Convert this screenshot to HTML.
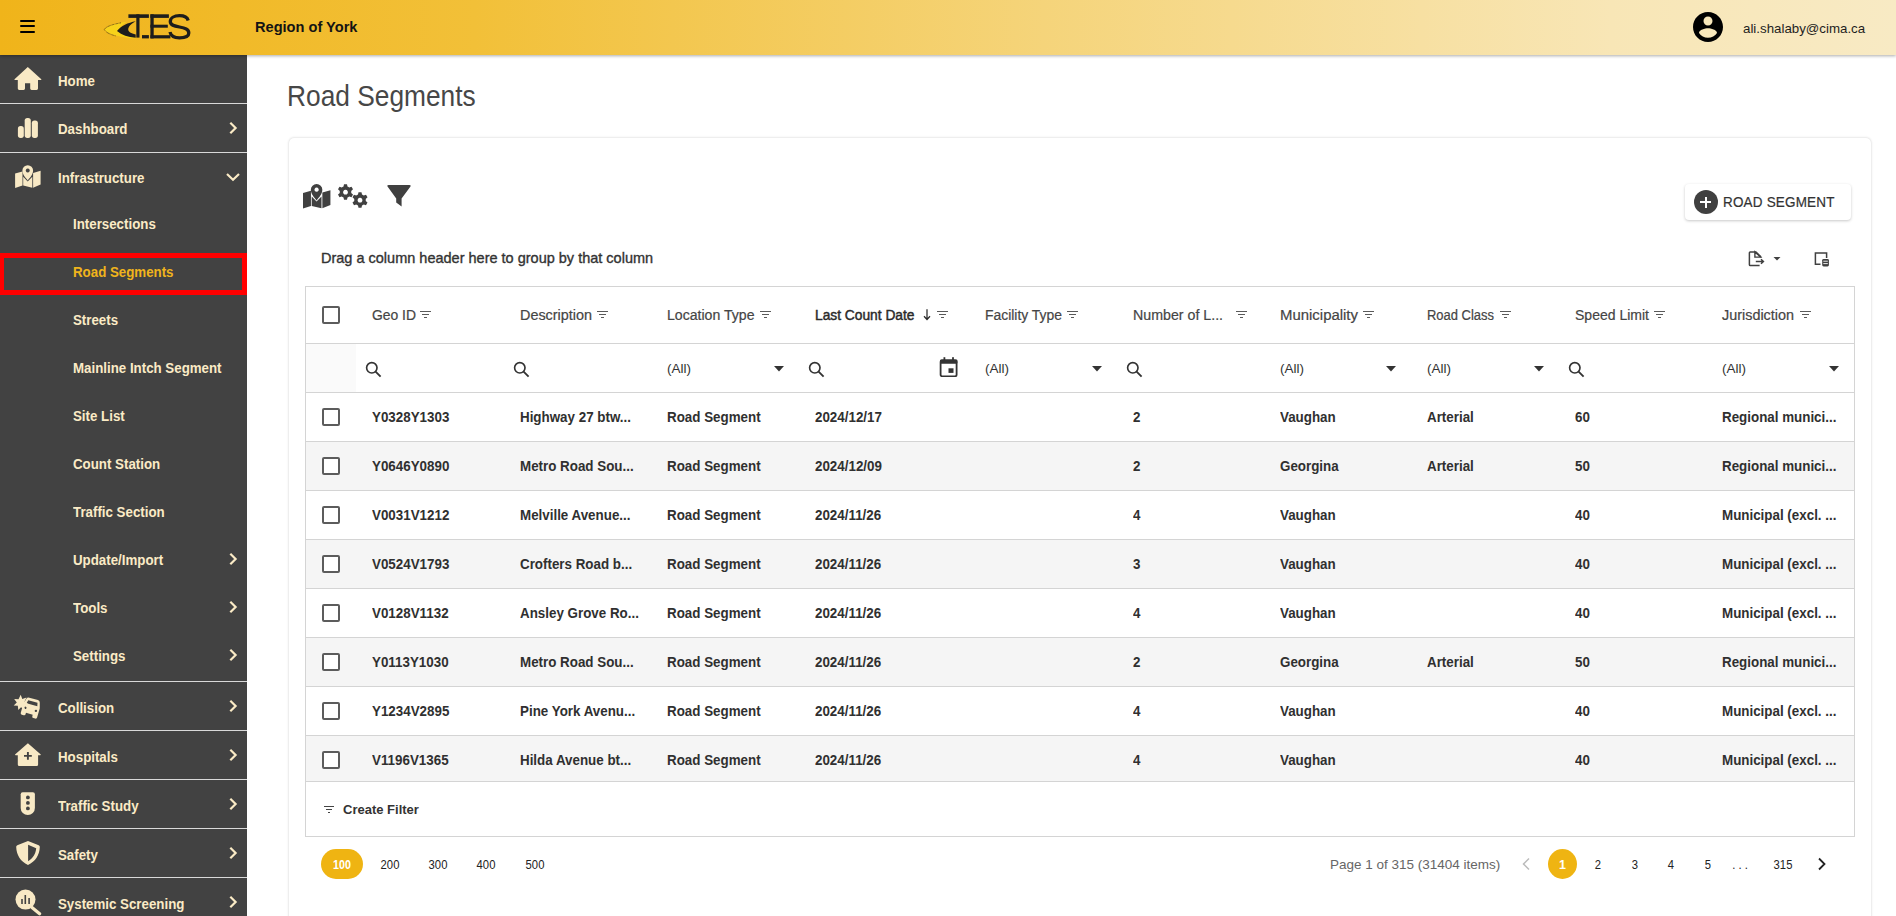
<!DOCTYPE html><html><head><meta charset="utf-8"><style>
*{box-sizing:border-box;margin:0;padding:0}
html,body{width:1896px;height:916px;overflow:hidden;background:#fff;font-family:"Liberation Sans",sans-serif;color:#333}
.a{position:absolute}
.t{position:absolute;white-space:nowrap;line-height:1}
#hdr{position:absolute;left:0;top:0;width:1896px;height:55px;background:linear-gradient(90deg,#f0b41a 0%,#f2c038 25%,#f5d47a 55%,#f8e6b6 85%,#f8eac4 100%);box-shadow:0 1px 3px rgba(0,0,0,.33);z-index:5}
#side{position:absolute;left:0;top:55px;width:247px;height:861px;background:#424242;z-index:3;font-weight:bold;color:#fbebc6}
.sb{position:absolute;left:0;width:247px;height:1px;background:#d9d9d9}
.card{position:absolute;left:289px;top:138px;width:1582px;height:800px;background:#fff;border-radius:5px;box-shadow:0 0 2.5px rgba(0,0,0,.22)}
.cb{position:absolute;width:18px;height:18px;border:2px solid #5c5c5c;border-radius:2px;background:#fff}
.hd{color:#555;font-size:14px}
.dc{color:#303030;font-size:14px;font-weight:bold;transform-origin:0 0;transform:scaleX(0.955)}
</style></head><body>
<div id="hdr">
<div class="a" style="left:19.5px;top:19.5px;width:15.6px;height:2.5px;background:#000;border-radius:1.2px"></div>
<div class="a" style="left:19.5px;top:24.9px;width:15.6px;height:2.5px;background:#000;border-radius:1.2px"></div>
<div class="a" style="left:19.5px;top:30.5px;width:15.6px;height:2.5px;background:#000;border-radius:1.2px"></div>
<svg class="a" style="left:100px;top:8px" width="96" height="36" viewBox="0 0 96 36">
<path d="M27 13.8 C17 15 9 17.5 4.5 21.8 C9 26.5 22 30 35.7 30.6 L35.7 29.6 C28 29 22 27 17.2 23 C20 19 23 16 27 13.8 Z" fill="#f7d21a"/>
<path d="M21 14.8 C12 16.5 6 18.5 4.3 21.5 C6 24.5 10 26.5 16 28" fill="none" stroke="#2a2410" stroke-width="0.9" stroke-dasharray="0.8 0.6" opacity="0.75"/>
<path d="M35.7 13.2 C28 14.5 21 18 17 23 C22 27 28 29.2 35.7 29.8 L35.7 26.5 C31 25.5 28.2 23.8 28.2 21.5 C28.2 18.5 31 16 35.7 13.2 Z" fill="#1d1d1d"/>
<rect x="28.4" y="6.3" width="20.5" height="3.6" fill="#1d1d1d"/>
<rect x="36.3" y="6.3" width="3.2" height="23.3" fill="#1d1d1d"/>
<rect x="42" y="27.1" width="6.9" height="3.3" fill="#1d1d1d"/>
<rect x="50.4" y="6.3" width="3.3" height="24.1" fill="#1d1d1d"/>
<rect x="50.4" y="6.3" width="18.5" height="3.6" fill="#1d1d1d"/>
<rect x="50.4" y="16.7" width="17.4" height="3" fill="#1d1d1d"/>
<rect x="50.4" y="27.2" width="20" height="3.2" fill="#1d1d1d"/>
<path d="M88.2 12.5 C87.2 9 84 7.7 79.5 7.7 C74 7.7 70.3 10 70.3 13.5 C70.3 17 74 18 79.5 19 C85 20 88.8 21 88.8 25 C88.8 28.5 84.5 29.8 79.5 29.8 C74.5 29.8 70.8 28 70 24" fill="none" stroke="#1d1d1d" stroke-width="3.3"/>
</svg>
<div class="t" style="left:255px;top:20px;font-size:14.6px;font-weight:bold;color:#141414">Region of York</div>
<svg class="a" style="left:1690px;top:8.8px" width="36" height="36" viewBox="0 0 24 24"><path fill="#000" d="M12 2C6.48 2 2 6.48 2 12s4.48 10 10 10 10-4.48 10-10S17.52 2 12 2zm0 3c1.66 0 3 1.34 3 3s-1.34 3-3 3-3-1.34-3-3 1.34-3 3-3zm0 14.2c-2.5 0-4.71-1.28-6-3.22.03-1.99 4-3.08 6-3.08 1.99 0 5.97 1.09 6 3.08-1.29 1.94-3.5 3.22-6 3.22z"/></svg>
<div class="t" style="left:1743px;top:21.5px;font-size:13.6px;color:#1e1e1e;transform-origin:0 0;transform:scaleX(0.978)">ali.shalaby@cima.ca</div>
</div>
<div id="side">
<div class="t" style="left:58px;top:19px;font-size:14px;transform-origin:0 0;transform:scaleX(0.95)">Home</div>
<div class="t" style="left:58px;top:67px;font-size:14px;transform-origin:0 0;transform:scaleX(0.95)">Dashboard</div>
<svg class="a" style="left:226px;top:65.5px" width="14" height="14" viewBox="0 0 14 14"><path d="M4.3 1.8 L9.6 7 L4.3 12.2" fill="none" stroke="#fbebc6" stroke-width="2.2"/></svg>
<div class="t" style="left:58px;top:116px;font-size:14px;transform-origin:0 0;transform:scaleX(0.95)">Infrastructure</div>
<svg class="a" style="left:225px;top:114.5px" width="16" height="14" viewBox="0 0 16 14"><path d="M2 4 L8 9.8 L14 4" fill="none" stroke="#fbebc6" stroke-width="2.2"/></svg>
<div class="sb" style="top:48px"></div>
<div class="sb" style="top:97px"></div>
<div class="sb" style="top:626px"></div>
<div class="sb" style="top:675px"></div>
<div class="sb" style="top:724px"></div>
<div class="sb" style="top:773px"></div>
<div class="sb" style="top:822px"></div>
<div class="t" style="left:73px;top:162px;font-size:14px;transform-origin:0 0;transform:scaleX(0.95);color:#fbebc6">Intersections</div>
<div class="t" style="left:73px;top:210px;font-size:14px;transform-origin:0 0;transform:scaleX(0.95);color:#f0b41c">Road Segments</div>
<div class="t" style="left:73px;top:258px;font-size:14px;transform-origin:0 0;transform:scaleX(0.95);color:#fbebc6">Streets</div>
<div class="t" style="left:73px;top:306px;font-size:14px;transform-origin:0 0;transform:scaleX(0.95);color:#fbebc6">Mainline Intch Segment</div>
<div class="t" style="left:73px;top:354px;font-size:14px;transform-origin:0 0;transform:scaleX(0.95);color:#fbebc6">Site List</div>
<div class="t" style="left:73px;top:402px;font-size:14px;transform-origin:0 0;transform:scaleX(0.95);color:#fbebc6">Count Station</div>
<div class="t" style="left:73px;top:450px;font-size:14px;transform-origin:0 0;transform:scaleX(0.95);color:#fbebc6">Traffic Section</div>
<div class="t" style="left:73px;top:498px;font-size:14px;transform-origin:0 0;transform:scaleX(0.95);color:#fbebc6">Update/Import</div>
<svg class="a" style="left:226px;top:496.5px" width="14" height="14" viewBox="0 0 14 14"><path d="M4.3 1.8 L9.6 7 L4.3 12.2" fill="none" stroke="#fbebc6" stroke-width="2.2"/></svg>
<div class="t" style="left:73px;top:546px;font-size:14px;transform-origin:0 0;transform:scaleX(0.95);color:#fbebc6">Tools</div>
<svg class="a" style="left:226px;top:544.5px" width="14" height="14" viewBox="0 0 14 14"><path d="M4.3 1.8 L9.6 7 L4.3 12.2" fill="none" stroke="#fbebc6" stroke-width="2.2"/></svg>
<div class="t" style="left:73px;top:594px;font-size:14px;transform-origin:0 0;transform:scaleX(0.95);color:#fbebc6">Settings</div>
<svg class="a" style="left:226px;top:592.5px" width="14" height="14" viewBox="0 0 14 14"><path d="M4.3 1.8 L9.6 7 L4.3 12.2" fill="none" stroke="#fbebc6" stroke-width="2.2"/></svg>
<div class="a" style="left:-1px;top:198px;width:248px;height:42px;border:5px solid #f00"></div>
<div class="t" style="left:58px;top:645.7px;font-size:14px;transform-origin:0 0;transform:scaleX(0.95)">Collision</div>
<svg class="a" style="left:226px;top:644.2px" width="14" height="14" viewBox="0 0 14 14"><path d="M4.3 1.8 L9.6 7 L4.3 12.2" fill="none" stroke="#fbebc6" stroke-width="2.2"/></svg>
<div class="t" style="left:58px;top:694.7px;font-size:14px;transform-origin:0 0;transform:scaleX(0.95)">Hospitals</div>
<svg class="a" style="left:226px;top:693.2px" width="14" height="14" viewBox="0 0 14 14"><path d="M4.3 1.8 L9.6 7 L4.3 12.2" fill="none" stroke="#fbebc6" stroke-width="2.2"/></svg>
<div class="t" style="left:58px;top:743.7px;font-size:14px;transform-origin:0 0;transform:scaleX(0.95)">Traffic Study</div>
<svg class="a" style="left:226px;top:742.2px" width="14" height="14" viewBox="0 0 14 14"><path d="M4.3 1.8 L9.6 7 L4.3 12.2" fill="none" stroke="#fbebc6" stroke-width="2.2"/></svg>
<div class="t" style="left:58px;top:792.7px;font-size:14px;transform-origin:0 0;transform:scaleX(0.95)">Safety</div>
<svg class="a" style="left:226px;top:791.2px" width="14" height="14" viewBox="0 0 14 14"><path d="M4.3 1.8 L9.6 7 L4.3 12.2" fill="none" stroke="#fbebc6" stroke-width="2.2"/></svg>
<div class="t" style="left:58px;top:841.7px;font-size:14px;transform-origin:0 0;transform:scaleX(0.95)">Systemic Screening</div>
<svg class="a" style="left:226px;top:840.2px" width="14" height="14" viewBox="0 0 14 14"><path d="M4.3 1.8 L9.6 7 L4.3 12.2" fill="none" stroke="#fbebc6" stroke-width="2.2"/></svg>
<svg class="a" style="left:14px;top:11px" width="28" height="25" viewBox="14 66 28 25"><path fill="#f8e9c5" d="M27.8 66.9 L41.3 79.2 Q41.8 80 40.8 80 L38 80 L38 88.6 Q38 90 36.6 90 L31.6 90 Q30.2 90 30.2 88.6 L30.2 83.3 L25 83.3 L25 88.6 Q25 90 23.6 90 L19.2 90 Q17.8 90 17.8 88.6 L17.8 80 L15 80 Q14 80 14.5 79.2 Z"/></svg>
<svg class="a" style="left:17px;top:62px" width="22" height="22" viewBox="17 117 22 22"><rect x="17.9" y="126.1" width="5.9" height="11.8" rx="2.6" fill="#f8e9c5"/><rect x="24.7" y="117.9" width="6.1" height="20" rx="2.6" fill="#f8e9c5"/><rect x="31.8" y="120.6" width="6.1" height="17.3" rx="2.6" fill="#f8e9c5"/></svg>
<svg class="a" style="left:14px;top:108px" width="28" height="26" viewBox="14 163 28 26"><g transform="translate(15.1 165.1) scale(1.0)" fill="#f8e9c5"><path d="M0 8.3 L7.4 6.3 L7.4 20.4 L0 22.8 Z"/><path d="M8.1 11.6 L12.6 16.3 L17.2 11.6 L17.2 22.6 L8.1 20.4 Z"/><path d="M18 7.9 L25.5 5.7 L25.5 19.5 L18 22.6 Z"/><path fill-rule="evenodd" d="M12.65 15.3 C10.5 12.6 7.3 9.4 7.3 5.4 A5.35 5.35 0 0 1 18 5.4 C18 9.4 14.8 12.6 12.65 15.3 Z M12.65 3.3 A2 2 0 1 0 12.66 3.3 Z"/></g></svg>
<svg class="a" style="left:12px;top:637px" width="30" height="28" viewBox="12 692 30 28"><path fill="#f8e9c5" d="M20.7 694.8 L22.3 699 L26.5 697.5 L24.5 701.5 L28 703.5 L24 705 L24.8 709.8 L21 707.2 L18.3 710 L17.8 705.8 L13.7 705.5 L16.8 702.5 L14.2 699 L18.5 699.3 Z"/><g transform="rotate(16 31 708)"><path fill="#f8e9c5" fill-rule="evenodd" d="M24 700.5 Q24.5 698.5 26.5 698.5 L35.5 698.5 Q37.5 698.5 38 700.5 L39.5 706 L39.5 715.5 Q39.5 717 38 717 L36 717 Q34.5 717 34.5 715.5 L34.5 714 L27.5 714 L27.5 715.5 Q27.5 717 26 717 L24 717 Q22.5 717 22.5 715.5 L22.5 706 Z M26.2 701.2 L35.8 701.2 L36.6 704.6 L25.4 704.6 Z M25.5 708.2 a1.2 1.2 0 1 0 0.01 0 Z M36.5 708.2 a1.2 1.2 0 1 0 0.01 0 Z"/></g></svg>
<svg class="a" style="left:14px;top:687px" width="28" height="26" viewBox="14 742 28 26"><path fill="#f8e9c5" d="M27.9 743.2 L40.5 754.2 Q41.2 755.2 40.2 755.2 L38.1 755.2 L38.1 764.6 Q38.1 766.1 36.6 766.1 L19.3 766.1 Q17.8 766.1 17.8 764.6 L17.8 755.2 L15.6 755.2 Q14.6 755.2 15.3 754.2 Z"/><path d="M24 755.9 H31.8 M27.9 752 V759.8" stroke="#424242" stroke-width="1.9"/></svg>
<svg class="a" style="left:20px;top:736px" width="16" height="26" viewBox="20 791 16 26"><path fill="#f8e9c5" d="M20.7 794.2 Q20.7 792.2 22.7 792.2 L32.9 792.2 Q34.9 792.2 34.9 794.2 L34.9 808 A7.1 7.1 0 0 1 20.7 808 Z"/><circle cx="27.9" cy="797.4" r="1.9" fill="#424242"/><circle cx="27.9" cy="802.9" r="1.9" fill="#424242"/><circle cx="27.9" cy="808.4" r="1.9" fill="#424242"/></svg>
<svg class="a" style="left:15px;top:785px" width="26" height="27" viewBox="15 840 26 27"><path fill="#f8e9c5" fill-rule="evenodd" d="M28 841 L38.7 845.2 Q39.9 845.7 39.8 847 C39.5 855 35.5 861.5 28 865 C20.5 861.5 16.5 855 16.2 847 Q16.1 845.7 17.3 845.2 Z M28.1 844.8 L28.1 861.2 C33 858.3 35.7 853.8 36.2 848.3 Z"/></svg>
<svg class="a" style="left:14px;top:833px" width="28" height="28" viewBox="14 888 28 28"><circle cx="25.5" cy="899.6" r="10" fill="#f8e9c5"/><path d="M32 907.5 L39.6 913.8" stroke="#f8e9c5" stroke-width="3.2" stroke-linecap="round"/><path d="M22 899 V904 M25.3 895 V904 M29.1 898 V904" stroke="#424242" stroke-width="1.6"/></svg>
</div>
<div class="t" style="left:287px;top:81px;font-size:30px;color:#474747;transform-origin:0 0;transform:scaleX(0.877)">Road Segments</div>
<div class="card"></div>
<svg class="a" style="left:303px;top:184px" width="28" height="25" viewBox="0 0 28 25"><g transform="translate(0 0) scale(1.075)" fill="#404040"><path d="M0 8.3 L7.4 6.3 L7.4 20.4 L0 22.8 Z"/><path d="M8.1 11.6 L12.6 16.3 L17.2 11.6 L17.2 22.6 L8.1 20.4 Z"/><path d="M18 7.9 L25.5 5.7 L25.5 19.5 L18 22.6 Z"/><path fill-rule="evenodd" d="M12.65 15.3 C10.5 12.6 7.3 9.4 7.3 5.4 A5.35 5.35 0 0 1 18 5.4 C18 9.4 14.8 12.6 12.65 15.3 Z M12.65 3.3 A2 2 0 1 0 12.66 3.3 Z"/></g></svg>
<svg class="a" style="left:336px;top:183px" width="34" height="26" viewBox="0 0 34 26">
<g fill="#404040" fill-rule="evenodd">
<path d="M9.4 1 h0 M8 1.2 h3 l0.5 2.3 a6 6 0 0 1 1.8 1 l2.2 -0.8 1.5 2.6 -1.8 1.6 a6 6 0 0 1 0 2.1 l1.8 1.6 -1.5 2.6 -2.2 -0.8 a6 6 0 0 1 -1.8 1 l-0.5 2.3 h-3 l-0.5 -2.3 a6 6 0 0 1 -1.8 -1 l-2.2 0.8 -1.5 -2.6 1.8 -1.6 a6 6 0 0 1 0 -2.1 l-1.8 -1.6 1.5 -2.6 2.2 0.8 a6 6 0 0 1 1.8 -1 Z M9.5 6.8 a2.4 2.4 0 1 0 0.01 0 Z"/>
<path d="M22.5 9.2 h3 l0.5 2.3 a6 6 0 0 1 1.8 1 l2.2 -0.8 1.5 2.6 -1.8 1.6 a6 6 0 0 1 0 2.1 l1.8 1.6 -1.5 2.6 -2.2 -0.8 a6 6 0 0 1 -1.8 1 l-0.5 2.3 h-3 l-0.5 -2.3 a6 6 0 0 1 -1.8 -1 l-2.2 0.8 -1.5 -2.6 1.8 -1.6 a6 6 0 0 1 0 -2.1 l-1.8 -1.6 1.5 -2.6 2.2 0.8 a6 6 0 0 1 1.8 -1 Z M24 14.8 a2.4 2.4 0 1 0 0.01 0 Z"/>
</g></svg>
<svg class="a" style="left:386px;top:184px" width="26" height="24" viewBox="0 0 26 24">
<path fill="#404040" d="M2.5 1 H23.5 Q25.5 1 24.3 2.8 L15.6 14.6 V22.5 L10.2 18.6 V14.6 L1.7 2.8 Q0.5 1 2.5 1 Z"/>
</svg>
<div class="a" style="left:1685px;top:184px;width:166px;height:36px;border-radius:4px;background:#fff;box-shadow:0 1px 3px rgba(0,0,0,.22)"></div>
<div class="a" style="left:1693.5px;top:190px;width:24px;height:24px;border-radius:50%;background:#404040"></div>
<div class="a" style="left:1700px;top:201px;width:11px;height:2px;background:#fff"></div>
<div class="a" style="left:1704.5px;top:196.5px;width:2px;height:11px;background:#fff"></div>
<div class="t" style="left:1723px;top:195px;font-size:14.5px;color:#333;-webkit-text-stroke:0.2px #333;letter-spacing:0.2px;transform-origin:0 0;transform:scaleX(0.93)">ROAD SEGMENT</div>
<div class="t" style="left:321px;top:251px;font-size:14.5px;color:#333;-webkit-text-stroke:0.35px #333">Drag a column header here to group by that column</div>
<svg class="a" style="left:1746px;top:249px" width="36" height="19" viewBox="0 0 36 19">
<path d="M14.6 8.6 V7.6 L10 2.9 H4.2 Q3.4 2.9 3.4 3.7 V15.7 Q3.4 16.5 4.2 16.5 H13.6" fill="none" stroke="#404040" stroke-width="1.5" stroke-linejoin="round"/>
<path d="M8.9 2.9 V8.1 H14.6 Z" fill="none" stroke="#404040" stroke-width="1.4"/>
<path d="M9.8 12.5 H17.2 M15 10.3 L17.4 12.5 L15 14.7" fill="none" stroke="#404040" stroke-width="1.5"/>
<path d="M27.5 8.1 H34.5 L31 11.5 Z" fill="#404040"/>
</svg>
<svg class="a" style="left:1812px;top:249px" width="20" height="20" viewBox="0 0 20 20">
<path d="M8.5 15.2 H3.4 V4 H14.6 V9" fill="none" stroke="#404040" stroke-width="1.5"/>
<rect x="10.2" y="9.9" width="6.7" height="7.6" rx="1.4" fill="#404040"/>
<path d="M11.3 12.2 H15.8 M11.3 14.6 H15.8" stroke="#fff" stroke-width="0.9"/>
</svg>
<div class="a" style="left:305px;top:286px;width:1550px;height:551px;border:1px solid #d4d4d4"></div>
<div class="a" style="left:305px;top:343px;width:1549px;height:1px;background:#d4d4d4"></div>
<div class="a" style="left:305px;top:392px;width:1549px;height:1px;background:#d4d4d4"></div>
<div class="a" style="left:305px;top:441px;width:1549px;height:1px;background:#d4d4d4"></div>
<div class="a" style="left:305px;top:490px;width:1549px;height:1px;background:#d4d4d4"></div>
<div class="a" style="left:305px;top:539px;width:1549px;height:1px;background:#d4d4d4"></div>
<div class="a" style="left:305px;top:588px;width:1549px;height:1px;background:#d4d4d4"></div>
<div class="a" style="left:305px;top:637px;width:1549px;height:1px;background:#d4d4d4"></div>
<div class="a" style="left:305px;top:686px;width:1549px;height:1px;background:#d4d4d4"></div>
<div class="a" style="left:305px;top:735px;width:1549px;height:1px;background:#d4d4d4"></div>
<div class="a" style="left:305px;top:781px;width:1549px;height:1px;background:#d4d4d4"></div>
<div class="a" style="left:306px;top:442px;width:1548px;height:48px;background:#f5f5f5"></div>
<div class="a" style="left:306px;top:540px;width:1548px;height:48px;background:#f5f5f5"></div>
<div class="a" style="left:306px;top:638px;width:1548px;height:48px;background:#f5f5f5"></div>
<div class="a" style="left:306px;top:736px;width:1548px;height:45px;background:#f5f5f5"></div>
<div class="a" style="left:306px;top:344px;width:50px;height:48px;background:#fafafa"></div>
<div class="cb" style="left:322px;top:306px"></div>
<div class="t" style="left:372px;top:308px;font-size:14px;color:#454545;-webkit-text-stroke:0.2px #454545;transform-origin:0 0;transform:scaleX(0.992)">Geo ID</div>
<div class="a" style="left:420px;top:311px;width:11px;height:1.3px;background:#5a5a5a"></div><div class="a" style="left:422px;top:314px;width:7px;height:1.3px;background:#5a5a5a"></div><div class="a" style="left:424px;top:317px;width:3px;height:1.3px;background:#5a5a5a"></div>
<div class="t" style="left:520px;top:308px;font-size:14px;color:#454545;-webkit-text-stroke:0.2px #454545;transform-origin:0 0;transform:scaleX(1.028)">Description</div>
<div class="a" style="left:597px;top:311px;width:11px;height:1.3px;background:#5a5a5a"></div><div class="a" style="left:599px;top:314px;width:7px;height:1.3px;background:#5a5a5a"></div><div class="a" style="left:601px;top:317px;width:3px;height:1.3px;background:#5a5a5a"></div>
<div class="t" style="left:667px;top:308px;font-size:14px;color:#454545;-webkit-text-stroke:0.2px #454545;transform-origin:0 0;transform:scaleX(1.007)">Location Type</div>
<div class="a" style="left:760px;top:311px;width:11px;height:1.3px;background:#5a5a5a"></div><div class="a" style="left:762px;top:314px;width:7px;height:1.3px;background:#5a5a5a"></div><div class="a" style="left:764px;top:317px;width:3px;height:1.3px;background:#5a5a5a"></div>
<div class="t" style="left:815px;top:308px;font-size:14px;color:#2a2a2a;-webkit-text-stroke:0.45px #2a2a2a;transform-origin:0 0;transform:scaleX(0.983)">Last Count Date</div>
<div class="a" style="left:937px;top:311px;width:11px;height:1.3px;background:#5a5a5a"></div><div class="a" style="left:939px;top:314px;width:7px;height:1.3px;background:#5a5a5a"></div><div class="a" style="left:941px;top:317px;width:3px;height:1.3px;background:#5a5a5a"></div>
<div class="t" style="left:985px;top:308px;font-size:14px;color:#454545;-webkit-text-stroke:0.2px #454545;transform-origin:0 0;transform:scaleX(0.993)">Facility Type</div>
<div class="a" style="left:1067px;top:311px;width:11px;height:1.3px;background:#5a5a5a"></div><div class="a" style="left:1069px;top:314px;width:7px;height:1.3px;background:#5a5a5a"></div><div class="a" style="left:1071px;top:317px;width:3px;height:1.3px;background:#5a5a5a"></div>
<div class="t" style="left:1133px;top:308px;font-size:14px;color:#454545;-webkit-text-stroke:0.2px #454545;transform-origin:0 0;transform:scaleX(1.015)">Number of L...</div>
<div class="a" style="left:1236px;top:311px;width:11px;height:1.3px;background:#5a5a5a"></div><div class="a" style="left:1238px;top:314px;width:7px;height:1.3px;background:#5a5a5a"></div><div class="a" style="left:1240px;top:317px;width:3px;height:1.3px;background:#5a5a5a"></div>
<div class="t" style="left:1280px;top:308px;font-size:14px;color:#454545;-webkit-text-stroke:0.2px #454545;transform-origin:0 0;transform:scaleX(1.066)">Municipality</div>
<div class="a" style="left:1363px;top:311px;width:11px;height:1.3px;background:#5a5a5a"></div><div class="a" style="left:1365px;top:314px;width:7px;height:1.3px;background:#5a5a5a"></div><div class="a" style="left:1367px;top:317px;width:3px;height:1.3px;background:#5a5a5a"></div>
<div class="t" style="left:1427px;top:308px;font-size:14px;color:#454545;-webkit-text-stroke:0.2px #454545;transform-origin:0 0;transform:scaleX(0.926)">Road Class</div>
<div class="a" style="left:1500px;top:311px;width:11px;height:1.3px;background:#5a5a5a"></div><div class="a" style="left:1502px;top:314px;width:7px;height:1.3px;background:#5a5a5a"></div><div class="a" style="left:1504px;top:317px;width:3px;height:1.3px;background:#5a5a5a"></div>
<div class="t" style="left:1575px;top:308px;font-size:14px;color:#454545;-webkit-text-stroke:0.2px #454545;transform-origin:0 0;transform:scaleX(1.001)">Speed Limit</div>
<div class="a" style="left:1654px;top:311px;width:11px;height:1.3px;background:#5a5a5a"></div><div class="a" style="left:1656px;top:314px;width:7px;height:1.3px;background:#5a5a5a"></div><div class="a" style="left:1658px;top:317px;width:3px;height:1.3px;background:#5a5a5a"></div>
<div class="t" style="left:1722px;top:308px;font-size:14px;color:#454545;-webkit-text-stroke:0.2px #454545;transform-origin:0 0;transform:scaleX(1.028)">Jurisdiction</div>
<div class="a" style="left:1800px;top:311px;width:11px;height:1.3px;background:#5a5a5a"></div><div class="a" style="left:1802px;top:314px;width:7px;height:1.3px;background:#5a5a5a"></div><div class="a" style="left:1804px;top:317px;width:3px;height:1.3px;background:#5a5a5a"></div>
<svg class="a" style="left:921.5px;top:307px" width="10" height="14" viewBox="0 0 10 14"><path d="M5 2.3 V12.3 M2 9.3 L5 12.5 L8 9.3" fill="none" stroke="#2a2a2a" stroke-width="1.25"/></svg>
<svg class="a" style="left:365px;top:361px" width="17" height="17" viewBox="0 0 17 17"><circle cx="6.8" cy="6.8" r="5.2" fill="none" stroke="#333" stroke-width="1.65"/><path d="M10.6 10.6 L15.6 15.6" stroke="#333" stroke-width="1.9"/></svg>
<svg class="a" style="left:513px;top:361px" width="17" height="17" viewBox="0 0 17 17"><circle cx="6.8" cy="6.8" r="5.2" fill="none" stroke="#333" stroke-width="1.65"/><path d="M10.6 10.6 L15.6 15.6" stroke="#333" stroke-width="1.9"/></svg>
<div class="t" style="left:667px;top:362px;font-size:13.5px;color:#333">(All)</div>
<svg class="a" style="left:774px;top:366px" width="10" height="6" viewBox="0 0 10 6"><path d="M0 0 H10 L5 5.5 Z" fill="#333"/></svg>
<svg class="a" style="left:808px;top:361px" width="17" height="17" viewBox="0 0 17 17"><circle cx="6.8" cy="6.8" r="5.2" fill="none" stroke="#333" stroke-width="1.65"/><path d="M10.6 10.6 L15.6 15.6" stroke="#333" stroke-width="1.9"/></svg>
<svg class="a" style="left:939px;top:357px" width="20" height="20" viewBox="0 0 20 20"><rect x="1.6" y="3.3" width="16" height="16" rx="1.6" fill="none" stroke="#333" stroke-width="1.8"/><rect x="1" y="2.6" width="17.4" height="4.2" rx="1.2" fill="#333"/><rect x="4.5" y="0.2" width="1.8" height="3" fill="#333"/><rect x="13.1" y="0.2" width="1.8" height="3" fill="#333"/><rect x="9.5" y="11.3" width="5" height="4.6" fill="#333"/></svg>
<div class="t" style="left:985px;top:362px;font-size:13.5px;color:#333">(All)</div>
<svg class="a" style="left:1092px;top:366px" width="10" height="6" viewBox="0 0 10 6"><path d="M0 0 H10 L5 5.5 Z" fill="#333"/></svg>
<svg class="a" style="left:1126px;top:361px" width="17" height="17" viewBox="0 0 17 17"><circle cx="6.8" cy="6.8" r="5.2" fill="none" stroke="#333" stroke-width="1.65"/><path d="M10.6 10.6 L15.6 15.6" stroke="#333" stroke-width="1.9"/></svg>
<div class="t" style="left:1280px;top:362px;font-size:13.5px;color:#333">(All)</div>
<svg class="a" style="left:1386px;top:366px" width="10" height="6" viewBox="0 0 10 6"><path d="M0 0 H10 L5 5.5 Z" fill="#333"/></svg>
<div class="t" style="left:1427px;top:362px;font-size:13.5px;color:#333">(All)</div>
<svg class="a" style="left:1534px;top:366px" width="10" height="6" viewBox="0 0 10 6"><path d="M0 0 H10 L5 5.5 Z" fill="#333"/></svg>
<svg class="a" style="left:1568px;top:361px" width="17" height="17" viewBox="0 0 17 17"><circle cx="6.8" cy="6.8" r="5.2" fill="none" stroke="#333" stroke-width="1.65"/><path d="M10.6 10.6 L15.6 15.6" stroke="#333" stroke-width="1.9"/></svg>
<div class="t" style="left:1722px;top:362px;font-size:13.5px;color:#333">(All)</div>
<svg class="a" style="left:1829px;top:366px" width="10" height="6" viewBox="0 0 10 6"><path d="M0 0 H10 L5 5.5 Z" fill="#333"/></svg>
<div class="cb" style="left:322px;top:408px"></div>
<div class="t dc" style="left:372px;top:410px">Y0328Y1303</div>
<div class="t dc" style="left:520px;top:410px">Highway 27 btw...</div>
<div class="t dc" style="left:667px;top:410px">Road Segment</div>
<div class="t dc" style="left:815px;top:410px">2024/12/17</div>
<div class="t dc" style="left:1133px;top:410px">2</div>
<div class="t dc" style="left:1280px;top:410px">Vaughan</div>
<div class="t dc" style="left:1427px;top:410px">Arterial</div>
<div class="t dc" style="left:1575px;top:410px">60</div>
<div class="t dc" style="left:1722px;top:410px">Regional munici...</div>
<div class="cb" style="left:322px;top:457px"></div>
<div class="t dc" style="left:372px;top:459px">Y0646Y0890</div>
<div class="t dc" style="left:520px;top:459px">Metro Road Sou...</div>
<div class="t dc" style="left:667px;top:459px">Road Segment</div>
<div class="t dc" style="left:815px;top:459px">2024/12/09</div>
<div class="t dc" style="left:1133px;top:459px">2</div>
<div class="t dc" style="left:1280px;top:459px">Georgina</div>
<div class="t dc" style="left:1427px;top:459px">Arterial</div>
<div class="t dc" style="left:1575px;top:459px">50</div>
<div class="t dc" style="left:1722px;top:459px">Regional munici...</div>
<div class="cb" style="left:322px;top:506px"></div>
<div class="t dc" style="left:372px;top:508px">V0031V1212</div>
<div class="t dc" style="left:520px;top:508px">Melville Avenue...</div>
<div class="t dc" style="left:667px;top:508px">Road Segment</div>
<div class="t dc" style="left:815px;top:508px">2024/11/26</div>
<div class="t dc" style="left:1133px;top:508px">4</div>
<div class="t dc" style="left:1280px;top:508px">Vaughan</div>
<div class="t dc" style="left:1575px;top:508px">40</div>
<div class="t dc" style="left:1722px;top:508px">Municipal (excl. ...</div>
<div class="cb" style="left:322px;top:555px"></div>
<div class="t dc" style="left:372px;top:557px">V0524V1793</div>
<div class="t dc" style="left:520px;top:557px">Crofters Road b...</div>
<div class="t dc" style="left:667px;top:557px">Road Segment</div>
<div class="t dc" style="left:815px;top:557px">2024/11/26</div>
<div class="t dc" style="left:1133px;top:557px">3</div>
<div class="t dc" style="left:1280px;top:557px">Vaughan</div>
<div class="t dc" style="left:1575px;top:557px">40</div>
<div class="t dc" style="left:1722px;top:557px">Municipal (excl. ...</div>
<div class="cb" style="left:322px;top:604px"></div>
<div class="t dc" style="left:372px;top:606px">V0128V1132</div>
<div class="t dc" style="left:520px;top:606px">Ansley Grove Ro...</div>
<div class="t dc" style="left:667px;top:606px">Road Segment</div>
<div class="t dc" style="left:815px;top:606px">2024/11/26</div>
<div class="t dc" style="left:1133px;top:606px">4</div>
<div class="t dc" style="left:1280px;top:606px">Vaughan</div>
<div class="t dc" style="left:1575px;top:606px">40</div>
<div class="t dc" style="left:1722px;top:606px">Municipal (excl. ...</div>
<div class="cb" style="left:322px;top:653px"></div>
<div class="t dc" style="left:372px;top:655px">Y0113Y1030</div>
<div class="t dc" style="left:520px;top:655px">Metro Road Sou...</div>
<div class="t dc" style="left:667px;top:655px">Road Segment</div>
<div class="t dc" style="left:815px;top:655px">2024/11/26</div>
<div class="t dc" style="left:1133px;top:655px">2</div>
<div class="t dc" style="left:1280px;top:655px">Georgina</div>
<div class="t dc" style="left:1427px;top:655px">Arterial</div>
<div class="t dc" style="left:1575px;top:655px">50</div>
<div class="t dc" style="left:1722px;top:655px">Regional munici...</div>
<div class="cb" style="left:322px;top:702px"></div>
<div class="t dc" style="left:372px;top:704px">Y1234V2895</div>
<div class="t dc" style="left:520px;top:704px">Pine York Avenu...</div>
<div class="t dc" style="left:667px;top:704px">Road Segment</div>
<div class="t dc" style="left:815px;top:704px">2024/11/26</div>
<div class="t dc" style="left:1133px;top:704px">4</div>
<div class="t dc" style="left:1280px;top:704px">Vaughan</div>
<div class="t dc" style="left:1575px;top:704px">40</div>
<div class="t dc" style="left:1722px;top:704px">Municipal (excl. ...</div>
<div class="cb" style="left:322px;top:751px"></div>
<div class="t dc" style="left:372px;top:753px">V1196V1365</div>
<div class="t dc" style="left:520px;top:753px">Hilda Avenue bt...</div>
<div class="t dc" style="left:667px;top:753px">Road Segment</div>
<div class="t dc" style="left:815px;top:753px">2024/11/26</div>
<div class="t dc" style="left:1133px;top:753px">4</div>
<div class="t dc" style="left:1280px;top:753px">Vaughan</div>
<div class="t dc" style="left:1575px;top:753px">40</div>
<div class="t dc" style="left:1722px;top:753px">Municipal (excl. ...</div>
<div class="a" style="left:324px;top:805.7px;width:10px;height:1.3px;background:#444"></div><div class="a" style="left:326px;top:808.7px;width:6px;height:1.3px;background:#444"></div><div class="a" style="left:328px;top:811.5px;width:2px;height:1.3px;background:#444"></div>
<div class="t" style="left:343px;top:802.5px;font-size:13px;font-weight:bold;color:#333">Create Filter</div>
<div class="a" style="left:321px;top:849px;width:42px;height:30px;border-radius:15px;background:#efb412"></div>
<div class="t" style="left:342px;top:859px;font-size:12.5px;font-weight:bold;color:#fff;transform:translateX(-50%) scaleX(0.86)">100</div>
<div class="t" style="left:390px;top:859px;font-size:12.5px;color:#222;transform:translateX(-50%) scaleX(0.9)">200</div>
<div class="t" style="left:438px;top:859px;font-size:12.5px;color:#222;transform:translateX(-50%) scaleX(0.9)">300</div>
<div class="t" style="left:486px;top:859px;font-size:12.5px;color:#222;transform:translateX(-50%) scaleX(0.9)">400</div>
<div class="t" style="left:535px;top:859px;font-size:12.5px;color:#222;transform:translateX(-50%) scaleX(0.9)">500</div>
<div class="t" style="left:1330px;top:858px;font-size:13.5px;color:#666">Page 1 of 315 (31404 items)</div>
<svg class="a" style="left:1521px;top:857px" width="10" height="14" viewBox="0 0 10 14"><path d="M8 1.5 L2.5 7 L8 12.5" fill="none" stroke="#bbb" stroke-width="1.5"/></svg>
<div class="a" style="left:1548px;top:849px;width:29px;height:30px;border-radius:50%;background:#efb412"></div>
<div class="t" style="left:1562.5px;top:859px;font-size:12.5px;font-weight:bold;color:#fff;transform:translateX(-50%)">1</div>
<div class="t" style="left:1598px;top:859px;font-size:12.5px;color:#222;transform:translateX(-50%) scaleX(0.9)">2</div>
<div class="t" style="left:1634.5px;top:859px;font-size:12.5px;color:#222;transform:translateX(-50%) scaleX(0.9)">3</div>
<div class="t" style="left:1671px;top:859px;font-size:12.5px;color:#222;transform:translateX(-50%) scaleX(0.9)">4</div>
<div class="t" style="left:1707.5px;top:859px;font-size:12.5px;color:#222;transform:translateX(-50%) scaleX(0.9)">5</div>
<div class="t" style="left:1740px;top:859px;font-size:12.5px;color:#222;transform:translateX(-50%) scaleX(0.9)">. . .</div>
<div class="t" style="left:1783px;top:859px;font-size:12.5px;color:#222;transform:translateX(-50%) scaleX(0.9)">315</div>
<svg class="a" style="left:1817px;top:857px" width="10" height="14" viewBox="0 0 10 14"><path d="M2 1.5 L7.5 7 L2 12.5" fill="none" stroke="#222" stroke-width="1.8"/></svg>
</body></html>
